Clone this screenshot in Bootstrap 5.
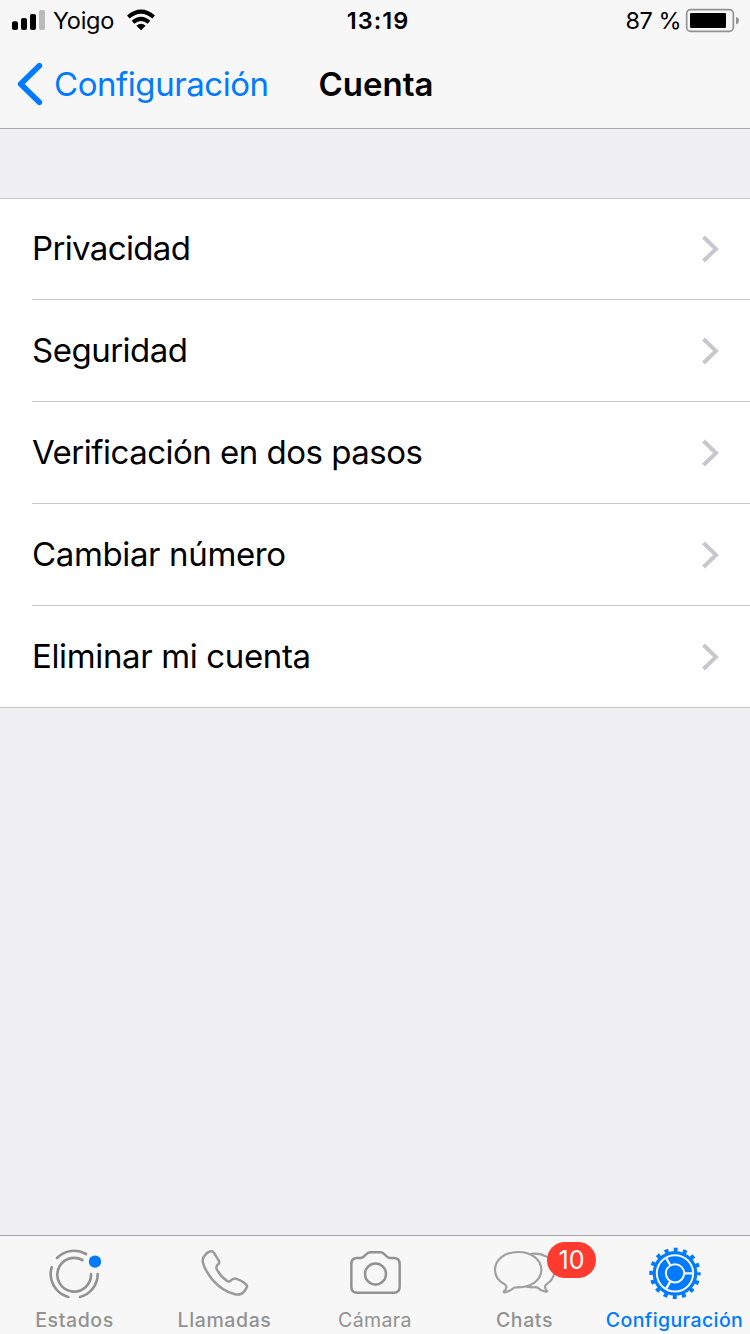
<!DOCTYPE html>
<html lang="es">
<head>
<meta charset="utf-8">
<meta name="viewport" content="width=device-width, initial-scale=1">
<title>Cuenta</title>
<link href="https://cdn.jsdelivr.net/npm/bootstrap@5.3.0/dist/css/bootstrap.min.css" rel="stylesheet">
<style>
  body { font-family: Inter, "Liberation Sans", sans-serif; background: #efeff4; color: #000; height: 1334px; overflow: hidden; }
  svg { display: block; flex: none; }
  .top-bar { background: #f7f7f7; height: 129px; border-bottom: 1px solid #a7a7aa; }
  .status-row { height: 40px; font-size: 23.5px; line-height: 42px; }
  .carrier { margin-left: 3px; letter-spacing: -.3px; }
  .wifi { margin-left: 7px; }
  .clock { letter-spacing: 1px; margin-left: 6px; }
  .charge { letter-spacing: -.5px; margin-right: -1px; }
  .title-row { height: 88px; font-size: 33px; line-height: 88px; }
  .title-row a, .tab-link.current { color: #007aff; }
  .title-row a { letter-spacing: -.45px; }
  .page-title { margin-left: 2px; }
  .side { flex: 1 1 0; }
  .settings { margin-top: 69px; border-top: 1px solid #c8c7cc; border-bottom: 1px solid #c8c7cc; background: #fff; padding-left: 32px; }
  .settings .list-group-item { height: 102px; padding: 0 31px 0 0; border: 0; border-bottom: 1px solid #c8c7cc; background: none; color: #000; font-size: 33px; line-height: 1; letter-spacing: -.5px; }
  .settings .list-group-item:first-child { height: 101px; letter-spacing: -.65px; }
  .settings .list-group-item:first-child span { margin-top: -2px; }
  .settings .list-group-item:nth-child(n+4) { letter-spacing: -.36px; }
  .settings .list-group-item:last-child { height: 101px; border-bottom: 0; }
  .tab-bar { height: 99px; background: #f7f7f7; border-top: 1px solid #a7a7aa; padding-top: 10px; }
  .tab-link { width: 150px; color: #929292; font-size: 19.5px; font-weight: 500; line-height: 24px; text-decoration: none; letter-spacing: .6px; }
  .tab-link .cap { margin-top: 8px; margin-right: 1px; white-space: nowrap; }
  .tab-link.plain { font-weight: 400; letter-spacing: .4px; }
  .tab-link.plain .cap { margin-right: 0; }
  .tab-link.current { letter-spacing: .4px; }
  .count { left: 97px; top: -4px; width: 49px; height: 36px; border-radius: 18px; background: #ff3b30; color: #fff; font-size: 25px; font-weight: 400; line-height: 37px; letter-spacing: 0; }
</style>
</head>
<body class="d-flex flex-column">
<header class="top-bar">
  <div class="status-row d-flex">
    <div class="side d-flex">
      <svg width="50" height="40" viewBox="0 0 150 120"><rect x="36" y="64" width="18" height="26" rx="6"/><rect x="63" y="54" width="18" height="36" rx="6"/><rect x="90" y="42" width="18" height="48" rx="6"/><rect x="117" y="30" width="18" height="60" rx="6" fill="#bbb"/></svg>
      <span class="carrier">Yoigo</span>
      <svg class="wifi" width="40" height="40" viewBox="363 0 120 120"><g fill="none" stroke="#000" stroke-width="12"><path d="M385 51Q423 19 461 51"/><path d="M399 67Q423 46 447 67"/></g><path d="M409 77Q423 66 437 77L423 91Z"/></svg>
    </div>
    <div class="clock fw-semibold text-center">13:19</div>
    <div class="side d-flex justify-content-end">
      <span class="charge">87 %</span>
      <svg width="70" height="40" viewBox="210 0 210 120"><rect x="230" y="29" width="140" height="65" rx="12" fill="none" stroke="#929292" stroke-width="5"/><rect x="240" y="39" width="108" height="45" rx="4"/><path d="M378 51Q387 53 387 61.500T378 73Z" fill="#929292"/></svg>
    </div>
  </div>
  <nav class="title-row d-flex">
    <a href="#" class="side d-flex text-decoration-none">
      <svg width="54" height="88" viewBox="0 120 162 264"><path d="M118 197L62 252L118 307" fill="none" stroke="#007aff" stroke-width="17" stroke-linecap="round" stroke-linejoin="round"/></svg>
      <span>Configuración</span>
    </a>
    <div class="page-title fw-semibold">Cuenta</div>
    <div class="side"></div>
  </nav>
</header>
<main class="flex-grow-1">
  <div class="settings list-group rounded-0">
    <a href="#" class="list-group-item d-flex align-items-center justify-content-between"><span>Privacidad</span><svg width="18" height="28" viewBox="0 0 18 28"><path d="M2.500 2L15 14L2.500 26" fill="none" stroke="#c7c7cc" stroke-width="4"/></svg></a>
    <a href="#" class="list-group-item d-flex align-items-center justify-content-between"><span>Seguridad</span><svg width="18" height="28" viewBox="0 0 18 28"><path d="M2.500 2L15 14L2.500 26" fill="none" stroke="#c7c7cc" stroke-width="4"/></svg></a>
    <a href="#" class="list-group-item d-flex align-items-center justify-content-between"><span>Verificación en dos pasos</span><svg width="18" height="28" viewBox="0 0 18 28"><path d="M2.500 2L15 14L2.500 26" fill="none" stroke="#c7c7cc" stroke-width="4"/></svg></a>
    <a href="#" class="list-group-item d-flex align-items-center justify-content-between"><span>Cambiar número</span><svg width="18" height="28" viewBox="0 0 18 28"><path d="M2.500 2L15 14L2.500 26" fill="none" stroke="#c7c7cc" stroke-width="4"/></svg></a>
    <a href="#" class="list-group-item d-flex align-items-center justify-content-between"><span>Eliminar mi cuenta</span><svg width="18" height="28" viewBox="0 0 18 28"><path d="M2.500 2L15 14L2.500 26" fill="none" stroke="#c7c7cc" stroke-width="4"/></svg></a>
  </div>
</main>
<nav class="tab-bar d-flex">
  <a href="#" class="tab-link d-flex flex-column align-items-center">
    <svg width="84" height="54" viewBox="39 48 252 162"><g fill="none" stroke="#929292" stroke-width="8" stroke-linecap="round"><path d="M111 84A71 71 0 0 1 198 72"/><path d="M95 112A71 71 0 0 0 145 201"/><path d="M180 201A71 71 0 0 0 233 132"/><path d="M187 90A50.500 50.500 0 1 0 213 132"/></g><circle cx="225" cy="95" r="18.500" fill="#007aff"/></svg>
    <span class="cap">Estados</span>
  </a>
  <a href="#" class="tab-link d-flex flex-column align-items-center">
    <svg width="84" height="54" viewBox="39 48 252 162"><path d="M101 81Q110 67 122 64Q128 62 132 69L146 91Q150 97 145 102Q137 109 140 117Q150 138 171 153Q177 157 183 151Q189 145 198 146Q214 151 227 162Q233 167 230 173Q222 188 213 192Q206 195 195 193Q157 184 127 149Q100 114 98 92Q98 86 101 81Z" fill="none" stroke="#9b9b9b" stroke-width="7.500" stroke-linejoin="round"/></svg>
    <span class="cap">Llamadas</span>
  </a>
  <a href="#" class="tab-link plain d-flex flex-column align-items-center">
    <svg width="84" height="54" viewBox="39 48 252 162"><g fill="none" stroke="#929292" stroke-width="7.500" stroke-linejoin="round"><path d="M112 84H122Q127 84 131 80L141 71Q145 67 151 67H181Q187 67 191 71L201 80Q205 84 210 84H221Q239 84 239 102V170Q239 188 221 188H112Q94 188 94 170V102Q94 84 112 84Z"/><circle cx="166.500" cy="132" r="31.500"/></g></svg>
    <span class="cap">Cámara</span>
  </a>
  <a href="#" class="tab-link d-flex flex-column align-items-center position-relative">
    <svg width="84" height="54" viewBox="9 48 252 162"><g fill="none" stroke="#a0a0a0" stroke-width="6.500" stroke-linejoin="round"><path d="M74 163C55 153 45 138 45 119C45 89 74 66 114 66C155 66 184 89 184 119C184 150 155 172 114 172C108 172 105 171 101 174Q89 185 73 187Q70 187 72 184Q81 175 79 168Q77 165 74 163Z"/><path d="M151 72C186 66 224 86 224 118C224 136 217 151 203 160C195 165 194 169 196 175Q198 180 202 184Q201 186 196 185Q181 182 174 174C170 170 164 172 157 172Q149 172 140 170"/></g></svg>
    <span class="cap">Chats</span>
    <span class="count position-absolute text-center">10</span>
  </a>
  <a href="#" class="tab-link current d-flex flex-column align-items-center">
    <svg width="84" height="54" viewBox="99 48 252 162"><circle cx="225" cy="130" r="71" fill="none" stroke="#007aff" stroke-width="12" stroke-dasharray="12 15.882" stroke-dashoffset="6"/><circle cx="225" cy="130" r="67" fill="#007aff"/><circle cx="225" cy="130" r="54.500" fill="none" stroke="#f7f7f7" stroke-width="6"/><circle cx="225" cy="130" r="27.500" fill="none" stroke="#f7f7f7" stroke-width="6"/><path d="M254 130H277M210.500 105L199 85M210.500 155L199 175" stroke="#f7f7f7" stroke-width="7"/></svg>
    <span class="cap">Configuración</span>
  </a>
</nav>
<script src="https://cdn.jsdelivr.net/npm/bootstrap@5.3.0/dist/js/bootstrap.bundle.min.js"></script>
</body>
</html>
